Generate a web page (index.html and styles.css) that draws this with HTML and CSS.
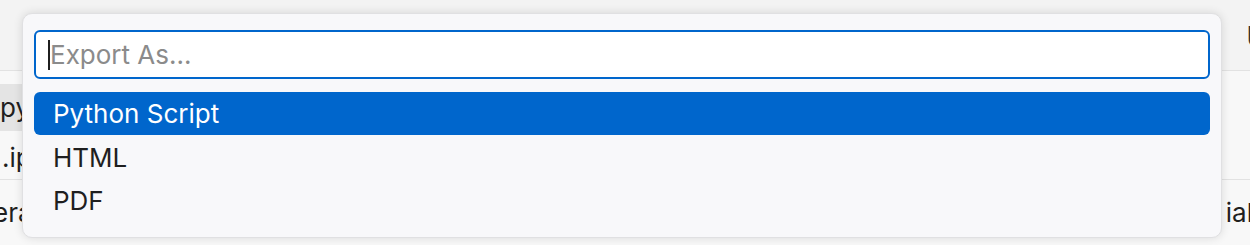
FILE: index.html
```html
<!DOCTYPE html>
<html lang="en">

<head>
  <meta charset="UTF-8">
  <meta name="viewport" content="width=device-width, initial-scale=1.0">
  <title>Export As</title>
  <link rel="stylesheet" href="styles.css">
</head>

<body>
  <!-- фон: редактор за палитрой -->
  <div class="editor">
    <div class="editor__tabs">
      <span class="editor__tab-end">U</span>
    </div>
    <div class="editor__rows">
      <div class="editor__row">
        <span class="editor__cell editor__cell_active">py</span>
      </div>
      <div class="editor__row">
        <span class="editor__cell editor__cell_ipynb">.ipynb</span>
      </div>
      <div class="editor__row editor__row_last">
        <span class="editor__cell editor__cell_gen">erate</span>
        <span class="editor__cell-right">ial</span>
      </div>
    </div>
  </div>

  <!-- палитра -->
  <div class="quick-pick">
    <div class="quick-pick__input">
      <span class="quick-pick__caret"></span>
      <span class="quick-pick__placeholder">Export As...</span>
    </div>
    <div class="quick-pick__list">
      <div class="quick-pick__item quick-pick__item_active">Python Script</div>
      <div class="quick-pick__item">HTML</div>
      <div class="quick-pick__item">PDF</div>
    </div>
  </div>
</body>

</html>
```

FILE: styles.css
```css
* {
  box-sizing: border-box
}

body {
  margin: 0;
  width: 1250px;
  height: 245px;
  overflow: hidden;
  position: relative;
  background-color: #f8f8f8;
  font-family: Inter, "Liberation Sans", sans-serif;
  color: #1f1f1f
}

.editor__tabs {
  height: 71px;
  background-color: #f3f3f3;
  border-bottom: 1px solid #e2e2e2;
  display: flex;
  justify-content: flex-end;
  align-items: flex-start
}

.editor__tab-end {
  margin-top: 20px;
  margin-right: -17px;
  font-size: 28px;
  color: #333
}

.editor__row {
  height: 55px;
  display: flex;
  justify-content: space-between;
  align-items: center;
  font-size: 26px
}

.editor__row:nth-child(2) {
  height: 54px;
  border-bottom: 1px solid #e2e2e2
}

.editor__row_last {
  height: 64px
}

.editor__cell {
  white-space: nowrap
}

.editor__cell_active {
  display: flex;
  align-items: center;
  height: 47px;
  margin-top: 18px;
  width: 40px;
  background-color: #e4e4e4
}

.editor__cell_ipynb {
  margin-left: 2px;
  margin-top: 10px
}

.editor__cell_gen {
  margin-left: -7px
}

.editor__cell-right {
  margin-right: -3px;
  color: #1f1f1f
}

.quick-pick {
  position: absolute;
  top: 13px;
  left: 22px;
  width: 1200px;
  height: 225px;
  padding: 16px 11px 0 11px;
  background-color: #f8f8fa;
  border: 1px solid #e0e0e2;
  border-radius: 10px;
  box-shadow: 0 0 10px rgba(0, 0, 0, .12)
}

.quick-pick__input {
  display: flex;
  align-items: center;
  height: 49px;
  padding-left: 12px;
  background-color: #fff;
  border: 2px solid #0066cc;
  border-radius: 6px
}

.quick-pick__caret {
  width: 2px;
  height: 30px;
  background-color: #1f1f1f
}

.quick-pick__placeholder {
  font-size: 26px;
  color: #8b8b8b
}

.quick-pick__list {
  margin-top: 13px
}

.quick-pick__item {
  height: 43px;
  display: flex;
  align-items: center;
  padding: 2px 0 0 19px;
  font-size: 26px;
  color: #1f1f1f;
  border-radius: 6px
}

.quick-pick__item_active {
  padding-top: 0;
  background-color: #0066cc;
  color: #fff
}
```
